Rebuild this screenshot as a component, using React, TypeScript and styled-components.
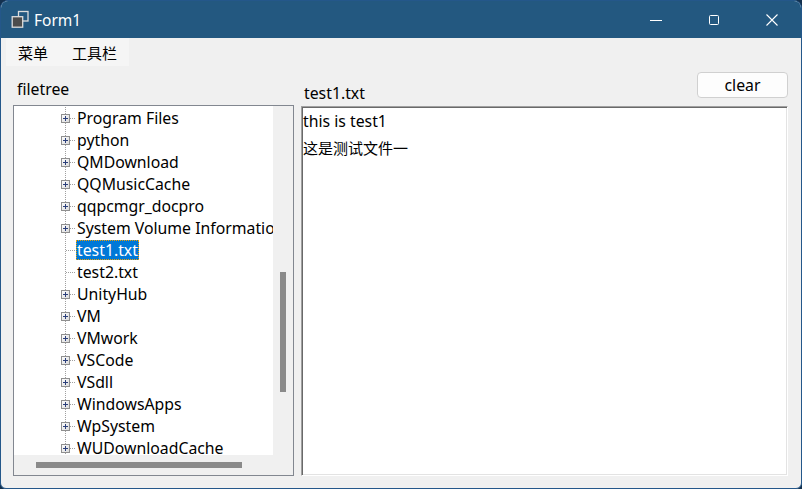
import React from "react";
import styled, { createGlobalStyle } from "styled-components";

const GlobalStyle = createGlobalStyle`
  html, body {
    margin: 0;
    padding: 0;
    background: #14314f;
  }
  body {
    font-family: "Noto Sans", "Noto Sans CJK SC", sans-serif;
  }
`;

type TreeItem = { name: string; leaf?: boolean; selected?: boolean };

const treeItems: TreeItem[] = [
  { name: "Program Files" },
  { name: "python" },
  { name: "QMDownload" },
  { name: "QQMusicCache" },
  { name: "qqpcmgr_docpro" },
  { name: "System Volume Information" },
  { name: "test1.txt", leaf: true, selected: true },
  { name: "test2.txt", leaf: true },
  { name: "UnityHub" },
  { name: "VM" },
  { name: "VMwork" },
  { name: "VSCode" },
  { name: "VSdll" },
  { name: "WindowsApps" },
  { name: "WpSystem" },
  { name: "WUDownloadCache" },
];

function FormIcon() {
  return (
    <svg width="18" height="18" viewBox="0 0 18 18">
      <rect x="7.5" y="1.5" width="9.5" height="9.5" fill="none" stroke="#dcdcdc" strokeWidth="1.3" />
      <rect x="1.2" y="6.7" width="10.5" height="10.5" fill="#4c4c4c" stroke="#dcdcdc" strokeWidth="1.3" />
    </svg>
  );
}

function Connector({ leaf }: { leaf?: boolean }) {
  return (
    <svg width="16" height="22" viewBox="0 0 16 22">
      <line x1="5.5" y1="0" x2="5.5" y2="22" stroke="#a0a0a0" strokeDasharray="1 1" />
      <line x1={leaf ? 6 : 10} y1="11.5" x2="16" y2="11.5" stroke="#a0a0a0" strokeDasharray="1 1" />
      {!leaf && (
        <>
          <defs>
            <linearGradient id="boxfill" x1="0" y1="0" x2="1" y2="1">
              <stop offset="0" stopColor="#ffffff" />
              <stop offset="1" stopColor="#d8d8d8" />
            </linearGradient>
          </defs>
          <rect x="1.5" y="7.5" width="8" height="8" fill="url(#boxfill)" stroke="#8f8f8f" />
          <line x1="3" y1="11.5" x2="8" y2="11.5" stroke="#2b3f7a" />
          <line x1="5.5" y1="9" x2="5.5" y2="14" stroke="#2b3f7a" />
        </>
      )}
    </svg>
  );
}

export default function App() {
  return (
    <>
      <GlobalStyle />
      <Window>
        <TitleBar>
          <TitleLeft>
            <FormIcon />
            <Title>Form1</Title>
          </TitleLeft>
          <Controls>
            <ControlButton>
              <svg width="12" height="12" viewBox="0 0 12 12">
                <line x1="0" y1="6.5" x2="12" y2="6.5" stroke="#fff" />
              </svg>
            </ControlButton>
            <ControlButton>
              <svg width="12" height="12" viewBox="0 0 12 12">
                <rect x="1.5" y="1.5" width="9" height="9" rx="1" fill="none" stroke="#fff" />
              </svg>
            </ControlButton>
            <ControlButton>
              <svg width="12" height="12" viewBox="0 0 12 12">
                <path d="M0.5 0.5 L11.5 11.5 M11.5 0.5 L0.5 11.5" stroke="#fff" strokeWidth="1.1" />
              </svg>
            </ControlButton>
          </Controls>
        </TitleBar>
        <Client>
          <MenuBar>
            <MenuItem>菜单</MenuItem>
            <MenuItem>工具栏</MenuItem>
          </MenuBar>
          <Body>
            <LeftPanel>
              <PanelLabel>filetree</PanelLabel>
              <TreeBox>
                <TreeView>
                  {treeItems.map((item) => (
                    <TreeRow key={item.name}>
                      <Connector leaf={item.leaf} />
                      <TreeText $selected={item.selected}>{item.name}</TreeText>
                    </TreeRow>
                  ))}
                </TreeView>
                <VScroll>
                  <VThumb />
                </VScroll>
                <HScroll>
                  <HThumb />
                </HScroll>
                <Corner />
              </TreeBox>
            </LeftPanel>
            <RightPanel>
              <RightHeader>
                <FileLabel>test1.txt</FileLabel>
                <ClearButton>clear</ClearButton>
              </RightHeader>
              <TextBox>
                <TextLine>this is test1</TextLine>
                <TextLine $cjk>这是测试文件一</TextLine>
              </TextBox>
            </RightPanel>
          </Body>
        </Client>
      </Window>
    </>
  );
}

const Window = styled.div`
  width: 802px;
  height: 489px;
  box-sizing: border-box;
  border: 1px solid #24578a;
  border-radius: 8px 8px 6px 6px;
  overflow: hidden;
  display: flex;
  flex-direction: column;
  background: #f0f0f0;
`;

const TitleBar = styled.div`
  height: 37px;
  flex: none;
  background: #235880;
  display: flex;
  align-items: center;
  justify-content: space-between;
  color: #ffffff;
`;

const TitleLeft = styled.div`
  display: flex;
  align-items: center;
  gap: 5px;
  padding-left: 10px;
  svg {
    margin-top: -1px;
  }
`;

const Title = styled.span`
  font-size: 15.5px;
  line-height: 20px;
`;

const Controls = styled.div`
  display: flex;
  height: 100%;
`;

const ControlButton = styled.div`
  width: 58px;
  height: 100%;
  display: flex;
  align-items: center;
  justify-content: center;
`;

const Client = styled.div`
  flex: 1;
  display: flex;
  flex-direction: column;
  min-height: 0;
`;

const MenuBar = styled.div`
  height: 28px;
  flex: none;
  display: flex;
  align-items: center;
  padding-left: 5px;
`;

const MenuItem = styled.div`
  padding: 0 12px;
  height: 100%;
  display: flex;
  align-items: center;
  background: #f5f5f5;
  font-size: 15px;
  color: #000;
`;

const Body = styled.div`
  flex: 1;
  display: grid;
  grid-template-columns: 281px 487px;
  column-gap: 7px;
  padding: 0 0 12px 12px;
  min-height: 0;
`;

const LeftPanel = styled.div`
  display: flex;
  flex-direction: column;
  min-height: 0;
`;

const PanelLabel = styled.div`
  height: 39px;
  flex: none;
  display: flex;
  align-items: center;
  padding: 6px 0 0 4px;
  box-sizing: border-box;
  font-size: 15.8px;
  color: #000;
`;

const TreeBox = styled.div`
  flex: 1;
  border: 1px solid #828790;
  background: #ffffff;
  display: grid;
  grid-template-columns: 1fr 20px;
  grid-template-rows: 1fr 20px;
  min-height: 0;
`;

const TreeView = styled.div`
  overflow: hidden;
  padding-top: 1px;
  min-width: 0;
`;

const TreeRow = styled.div`
  height: 22px;
  display: flex;
  align-items: center;
  padding-left: 46px;
  white-space: nowrap;
  svg {
    flex: none;
  }
`;

const TreeText = styled.span<{ $selected?: boolean }>`
  height: 20px;
  line-height: 20px;
  padding: 0 1px;
  box-sizing: border-box;
  font-size: 15.8px;
  color: ${(p) => (p.$selected ? "#ffffff" : "#000000")};
  background: ${(p) => (p.$selected ? "#0078d7" : "transparent")};
  outline: ${(p) => (p.$selected ? "1px dotted #f0a000" : "none")};
  outline-offset: -1px;
`;

const VScroll = styled.div`
  background: #f0f0f0;
  display: flex;
  justify-content: center;
`;

const VThumb = styled.div`
  width: 6px;
  height: 120px;
  margin-top: 166px;
  background: #8a8a8a;
`;

const HScroll = styled.div`
  background: #f0f0f0;
  display: flex;
  align-items: center;
  padding-left: 22px;
`;

const HThumb = styled.div`
  width: 206px;
  height: 6px;
  background: #8a8a8a;
`;

const Corner = styled.div`
  background: #f0f0f0;
`;

const RightPanel = styled.div`
  display: flex;
  flex-direction: column;
  min-height: 0;
`;

const RightHeader = styled.div`
  height: 40px;
  flex: none;
  display: flex;
  justify-content: space-between;
  align-items: flex-start;
`;

const FileLabel = styled.div`
  margin-top: 17px;
  padding-left: 3px;
  font-size: 15.8px;
  line-height: 20px;
  color: #000;
`;

const ClearButton = styled.div`
  margin-top: 6px;
  width: 91px;
  height: 26px;
  box-sizing: border-box;
  border: 1px solid #d0d0d0;
  border-radius: 4px;
  background: #fdfdfd;
  display: flex;
  align-items: center;
  justify-content: center;
  font-size: 15.8px;
  color: #000;
`;

const TextBox = styled.div`
  flex: 1;
  background: #ffffff;
  border-top: 1px solid #a0a0a0;
  border-left: 1px solid #a0a0a0;
  border-right: 1px solid #ffffff;
  border-bottom: 1px solid #ffffff;
  box-shadow: inset 1px 1px 0 #696969, inset -1px -1px 0 #e3e3e3;
  padding: 1px 0 0 1px;
`;

const TextLine = styled.div<{ $cjk?: boolean }>`
  font-size: ${(p) => (p.$cjk ? "15px" : "15.8px")};
  line-height: 27px;
  color: #000;
`;
